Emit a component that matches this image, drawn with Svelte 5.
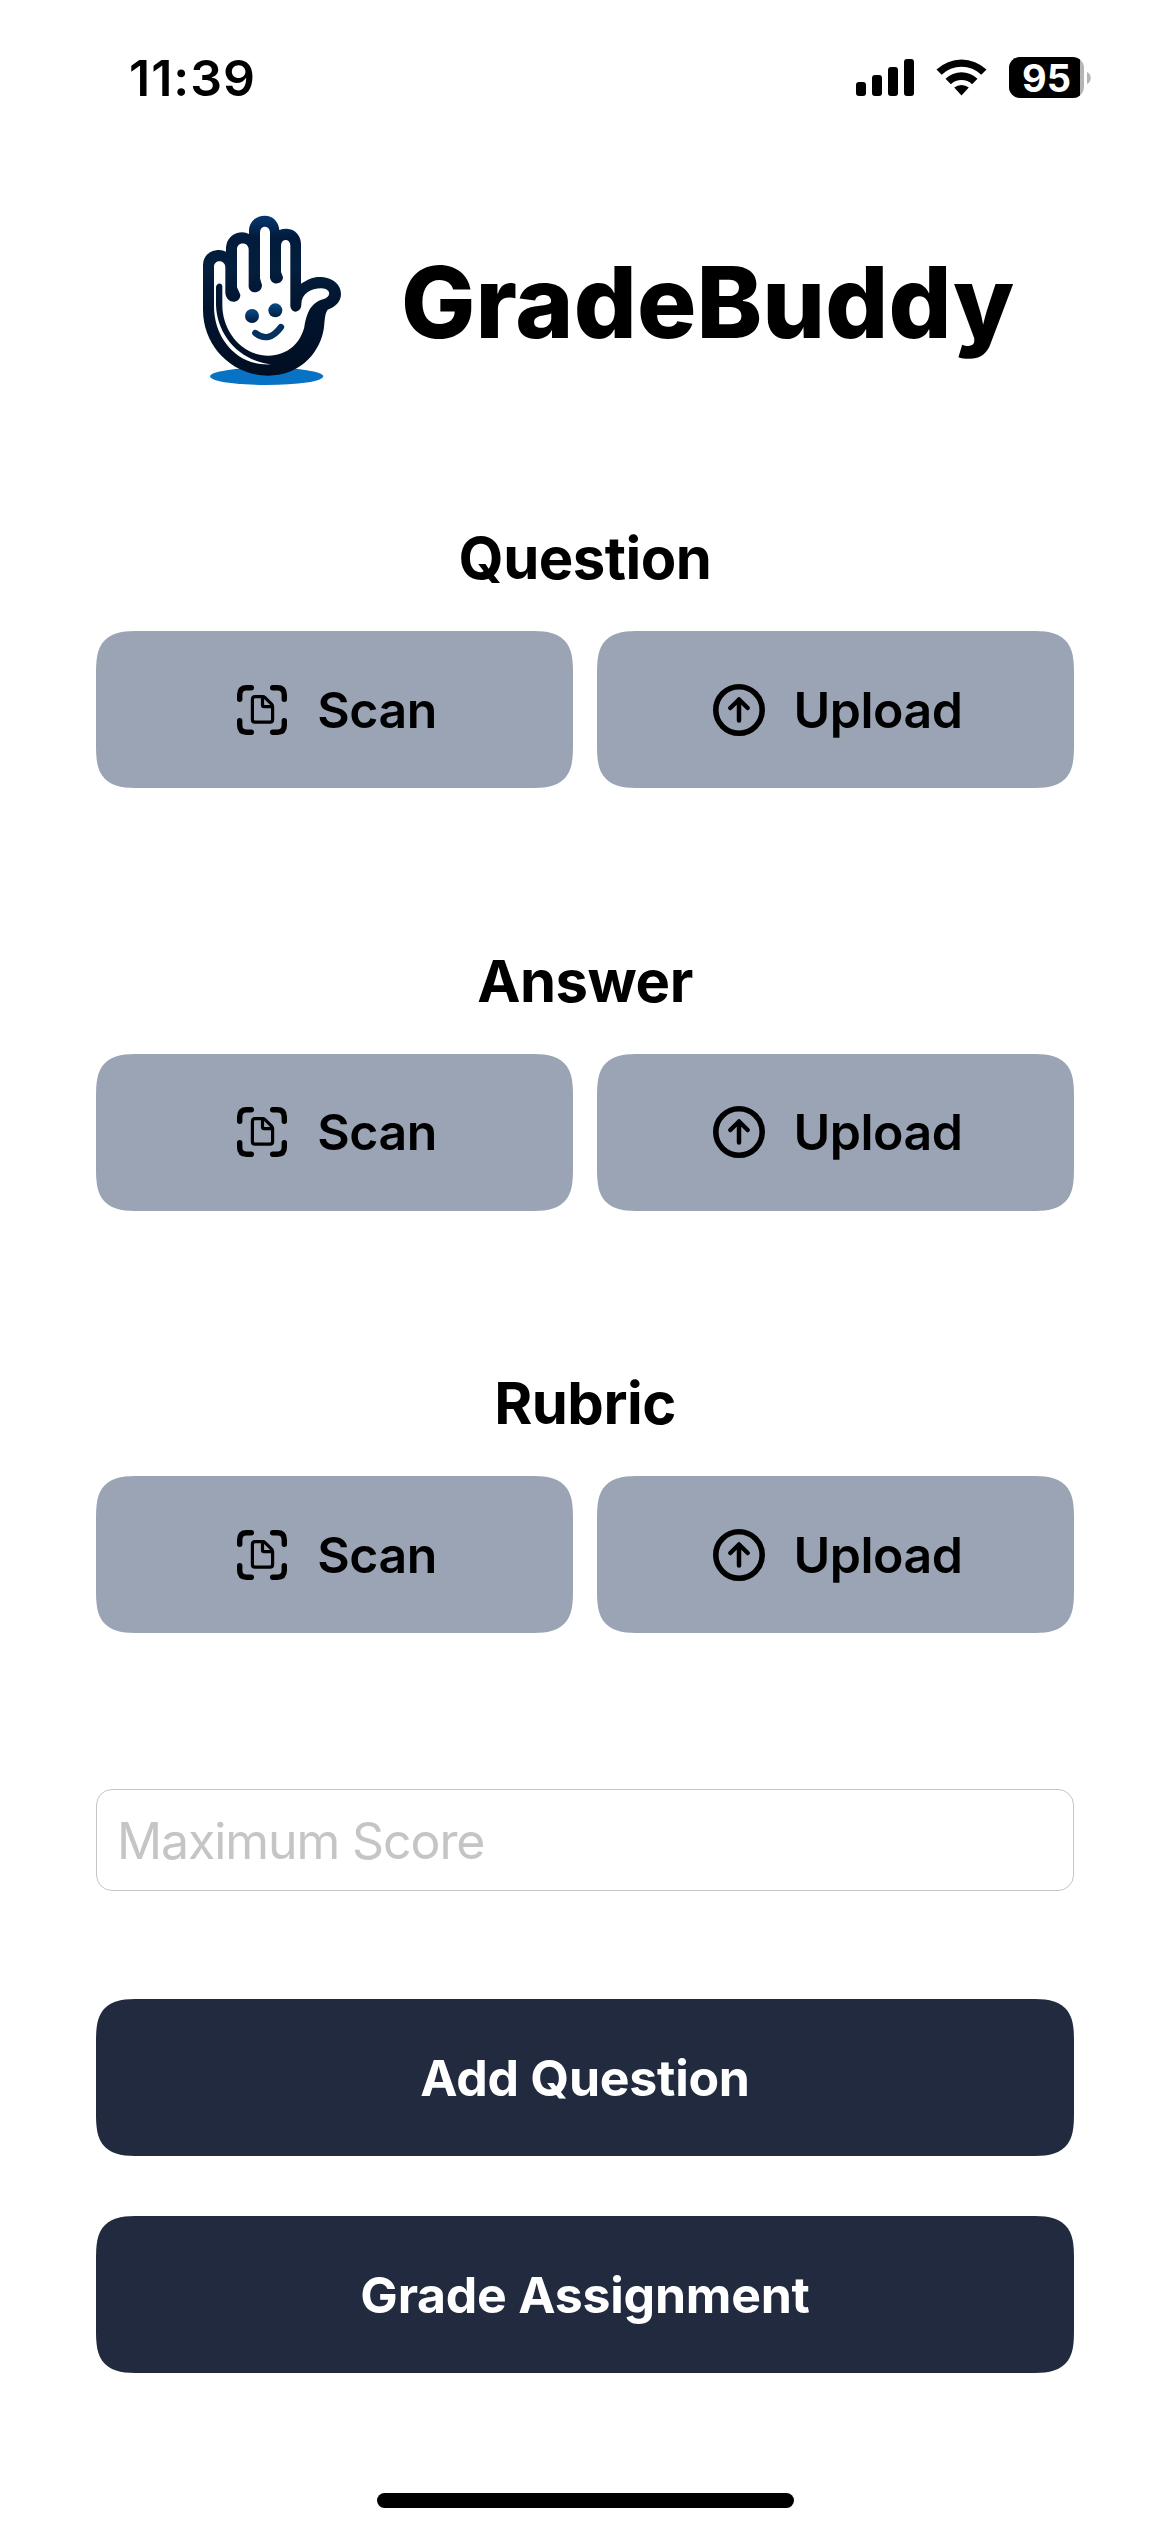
<script>
  const sections = ['Question', 'Answer', 'Rubric'];
  let maxScore = '';
</script>

<style>
  :global(body) {
    background: white;
  }

  .screen {
    display: flex;
    flex-direction: column;
    width: 1170px;
    height: 2532px;
    overflow: hidden;
    color: black;
    font-family: Inter, "Liberation Sans", sans-serif;
  }

  .status {
    display: flex;
    align-items: center;
    box-sizing: border-box;
    height: 156px;
    padding: 0 77px 0 129px;
  }

  .time {
    flex: 1;
    font-size: 50px;
    font-weight: 600;
    letter-spacing: 1px;
  }

  .brand {
    display: flex;
    align-items: center;
    height: 288px;
    padding-left: 180px;
  }

  h1 {
    margin: 0 0 0 41px;
    padding-top: 3px;
    font-size: 99px;
    font-weight: 800;
    letter-spacing: 0.1px;
  }

  main {
    padding: 0 96px;
  }

  section {
    height: 422.5px;
  }

  h2 {
    margin: 0;
    padding-top: 78px;
    height: 109px;
    line-height: 72px;
    text-align: center;
    font-size: 58px;
    font-weight: 700;
    letter-spacing: -0.5px;
  }

  .row {
    display: flex;
    gap: 24px;
  }

  button {
    display: flex;
    align-items: center;
    justify-content: center;
    height: 157px;
    padding: 0;
    border: 0;
    border-radius: 32px;
    font: inherit;
    font-size: 50px;
  }

  @supports (corner-shape: superellipse(1.6)) {
    button {
      border-radius: 44px;
      corner-shape: superellipse(1.6);
    }
  }

  .row button {
    flex: 1;
    gap: 28px;
    padding-left: 3px;
    background: #9ba4b5;
    color: black;
    font-weight: 600;
    letter-spacing: -0.5px;
  }

  input {
    box-sizing: border-box;
    display: block;
    width: 100%;
    height: 102px;
    margin: 77.5px 0 108px;
    padding: 2px 20px 0;
    border: 1px solid #c5c5c7;
    border-radius: 16px;
    font: inherit;
    font-size: 50px;
    letter-spacing: -1.1px;
  }

  input::placeholder {
    color: #c5c5c7;
    opacity: 1;
  }

  .primary {
    width: 100%;
    margin-bottom: 60px;
    background: #212a3e;
    color: white;
    font-weight: 700;
    letter-spacing: -0.25px;
  }

  .home {
    width: 417px;
    height: 15px;
    margin: auto auto 24px;
    border-radius: 8px;
    background: black;
  }
</style>

<div class="screen">
  <div class="status">
    <span class="time">11:39</span>
    <svg width="237" height="52" viewBox="0 -5 237 52">
      <defs>
        <clipPath id="charge"><rect x="153" y="0" width="71" height="41" /></clipPath>
      </defs>
      <rect x="0" y="25" width="10" height="14" rx="3" />
      <rect x="16" y="18" width="10" height="21" rx="3" />
      <rect x="32" y="10" width="10" height="29" rx="3" />
      <rect x="48" y="2" width="10" height="37" rx="3" />
      <path d="M80.500 12.500a36.500 36.500 0 0 1 50 0l-5.200 5.300a28.500 28.500 0 0 0-39.600 0zM89.500 21.800a23 23 0 0 1 32 0l-5.400 5.400a15.500 15.500 0 0 0-21.200 0zM98.200 30.500a11.500 11.500 0 0 1 14.600 0l-7.300 8z" />
      <rect x="153" y="0" width="75" height="41" rx="11" fill="#b5b5b5" />
      <rect x="153" y="0" width="75" height="41" rx="11" clip-path="url(#charge)" />
      <path d="M231 15c5 2 5 10 0 12z" fill="#b5b5b5" />
      <text x="190.500" y="34.500" fill="white" font-size="38" font-weight="700" text-anchor="middle">95</text>
    </svg>
  </div>

  <div class="brand">
    <svg width="180" height="200" viewBox="0 0 540 600">
      <defs>
        <linearGradient id="ink" gradientUnits="userSpaceOnUse" x1="0" y1="40" x2="0" y2="520">
          <stop offset="0" stop-color="#063c75" />
          <stop offset="0.15" stop-color="#011b3c" />
          <stop offset="0.35" stop-color="#041e3d" />
          <stop offset="0.6" stop-color="#01142e" />
          <stop offset="1" stop-color="#010e22" />
        </linearGradient>
        <linearGradient id="face" x1="0" y1="0" x2="0" y2="1">
          <stop offset="0" stop-color="#0a4b86" />
          <stop offset="1" stop-color="#011c3d" />
        </linearGradient>
      </defs>
      <ellipse cx="260" cy="529" rx="170" ry="26" fill="#0873c4" />
      <path fill="url(#ink)" d="M69 195C70 165 92 150 118 150Q129 150 138 155V143C140 114 162 97 187 97Q198 97 207 102V91C209 64 229 47 254 47C279 47 296 65 298 90Q307 86 320 86C346 87 363 107 363 132V251C383 239 398 231 418 231C456 231 483 253 483 282C483 304 466 322 443 329C432 344 435 370 430 394C414 470 350 527 265 527C155 527 69 437 69 330Z" />
      <path fill="white" d="M102 200C102 178 134 178 136 200V278C139 314 181 312 181 284L171 262V147C172 125 204 125 206 147V261C211 286 246 280 246 256L240 235V96C241 75 268 75 270 96V234C276 259 309 253 309 232L303 216V136C304 115 330 115 331 136V319C334 343 364 339 364 313C364 281 393 265 424 265C454 267 455 290 429 298C389 310 380 343 373 381C361 429 324 466 265 467C183 467 127 391 127 316V260C127 247 110 247 108 261V315C111 404 176 482 274 493C170 500 102 412 102 320Z" />
      <circle cx="216" cy="348" r="21" fill="url(#face)" />
      <circle cx="286" cy="331" r="21" fill="url(#face)" />
      <path d="M226 399Q266 431 303 381" fill="none" stroke="#053161" stroke-width="19" stroke-linecap="round" />
    </svg>
    <h1>GradeBuddy</h1>
  </div>

  <main>
    {#each sections as title}
      <section>
        <h2>{title}</h2>
        <div class="row">
          <button>
            <svg width="54" height="54" viewBox="0 0 54 54" fill="none" stroke="black" stroke-linecap="round" stroke-linejoin="round">
              <path stroke-width="5.400" d="M4.700 16.300V11.700Q4.700 4.700 11.700 4.700H16.300M37.700 4.700H42.300Q49.300 4.700 49.300 11.700V16.300M49.300 37.700V42.300Q49.300 49.300 42.300 49.300H37.700M16.300 49.300H11.700Q4.700 49.300 4.700 42.300V37.700" />
              <path stroke-width="3.200" d="M20 13.600H27.500Q29 13.600 30 14.600L36.600 21.200Q37.600 22.200 37.600 24V36.500Q37.600 39.200 35 39.200H20Q17.400 39.200 17.400 36.500V16.500Q17.400 13.600 20 13.600ZM27.500 14V22Q27.500 23.700 29 23.700H37" />
            </svg>
            Scan
          </button>
          <button>
            <svg width="54" height="54" viewBox="0 0 54 54" fill="none" stroke="black" stroke-linecap="round" stroke-linejoin="round">
              <circle cx="27" cy="27" r="23.200" stroke-width="5.600" />
              <path stroke-width="4.500" d="M27 37.500V16.500M18.300 25L27 16.500L35.700 25" />
            </svg>
            Upload
          </button>
        </div>
      </section>
    {/each}

    <input placeholder="Maximum Score" inputmode="numeric" bind:value={maxScore} />
    <button class="primary">Add Question</button>
    <button class="primary">Grade Assignment</button>
  </main>

  <div class="home"></div>
</div>
